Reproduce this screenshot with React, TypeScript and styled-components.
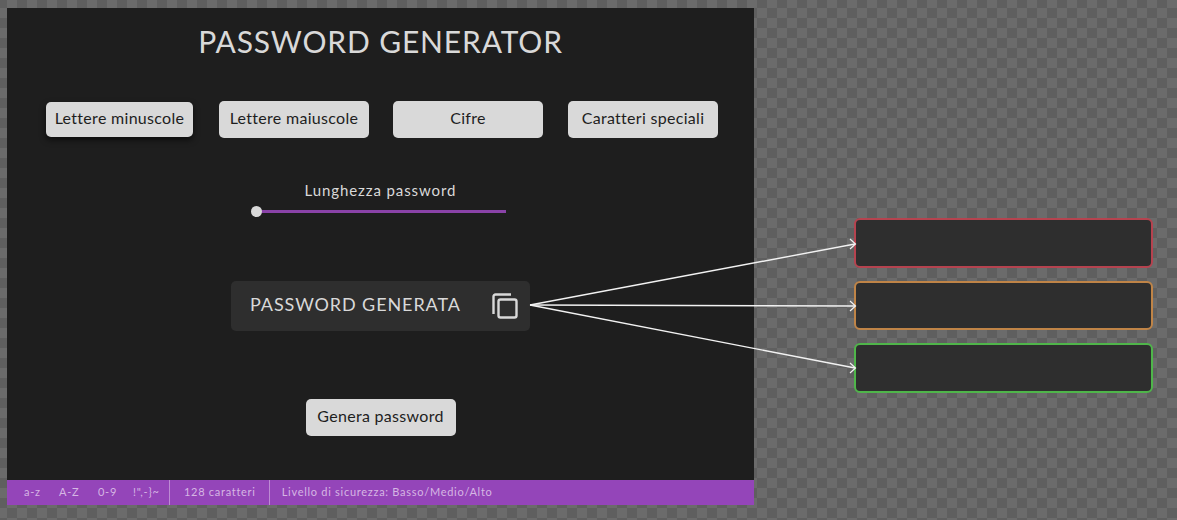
import React from 'react';
import styled, {createGlobalStyle} from 'styled-components';

const FONT = `"Lato", "Noto Sans", sans-serif`;

const GlobalStyle = createGlobalStyle`
    html, body {
        margin: 0;
        padding: 0;
        height: 100%;
        overflow: hidden;
    }
    body {
        font-family: ${FONT};
        background-color: #666666;
        background-image: conic-gradient(#6b6b6b 25%, #5f5f5f 0 50%, #6b6b6b 0 75%, #5f5f5f 0);
        background-size: 20px 20px;
        background-position: 7px 8px;
    }
`

const Canvas = styled.div`
    position: relative;
    width: 1177px;
    height: 520px;
    padding: 8px 0 0 7px;
    box-sizing: border-box;
    display: flex;
    align-items: flex-start;
    gap: 100px;
`

const Panel = styled.main`
    width: 747px;
    height: 497px;
    display: flex;
    flex-direction: column;
    align-items: center;
    background-color: #1e1e1e;
`

const Title = styled.h1`
    margin: 16px 0 0 0;
    height: 34px;
    line-height: 34px;
    font-size: 30px;
    font-weight: 400;
    letter-spacing: 0.85px;
    color: #d9d9d9;
`

const OptionRow = styled.div`
    margin-top: 43px;
    margin-left: 3px;
    display: flex;
    align-items: center;
    gap: 24px;

    & > button:last-child {
        margin-left: 1px;
    }
`

const Chip = styled.button<{$raised?: boolean}>`
    width: ${({$raised}) => ($raised ? '147px' : '150px')};
    height: ${({$raised}) => ($raised ? '35px' : '37px')};
    margin-right: ${({$raised}) => ($raised ? '2px' : '0')};
    padding: 0 0 4px 0;
    border: none;
    border-radius: 5px;
    background-color: #d9d9d9;
    box-shadow: ${({$raised}) => ($raised ? '0 3px 6px rgba(0, 0, 0, 0.6)' : 'none')};
    font-family: ${FONT};
    font-size: 16px;
    letter-spacing: 0.3px;
    color: #1e1e1e;
`

const SliderBlock = styled.div`
    margin-top: 42px;
    width: 250px;
    display: flex;
    flex-direction: column;
    align-items: center;
`

const SliderLabel = styled.div`
    height: 20px;
    line-height: 20px;
    font-size: 15px;
    letter-spacing: 0.9px;
    color: #d9d9d9;
`

const SliderTrack = styled.div`
    position: relative;
    margin-top: 10px;
    width: 100%;
    height: 3px;
    background-color: #8a43a8;
`

const SliderKnob = styled.span`
    position: absolute;
    left: -5px;
    top: -4px;
    width: 11px;
    height: 11px;
    border-radius: 50%;
    background-color: #d9d9d9;
`

const OutputBox = styled.div`
    margin-top: 68px;
    width: 299px;
    height: 50px;
    padding: 0 12px 0 19px;
    box-sizing: border-box;
    display: flex;
    align-items: center;
    justify-content: space-between;
    border-radius: 5px;
    background-color: #2e2e2e;
    font-size: 18px;
    letter-spacing: 0.9px;
    color: #d9d9d9;
`

const OutputText = styled.span`
    padding-bottom: 4px;
`

const CopyIcon = styled.svg`
    display: block;
    width: 26px;
    height: 26px;
`

const GenerateButton = styled(Chip)`
    margin-top: 68px;
`

const StatusBar = styled.footer`
    margin-top: auto;
    align-self: stretch;
    height: 25px;
    padding-left: 17px;
    display: flex;
    align-items: stretch;
    background-color: #9445b9;
    font-size: 11px;
    letter-spacing: 0.72px;
    color: #d6b6e4;
`

const CharsetGroup = styled.div`
    width: 145px;
    padding-bottom: 2px;
    display: flex;
    align-items: center;
`

const Charset = styled.span<{$width: number}>`
    width: ${({$width}) => $width}px;
`

const StatusCell = styled.div`
    padding: 0 13px 2px 12px;
    display: flex;
    align-items: center;
    border-left: 1px solid #bd8bd3;

    &:nth-child(2) {
        padding-left: 14px;
    }
`

const LevelColumn = styled.section`
    margin-top: 210px;
    display: flex;
    flex-direction: column;
    gap: 13px;
`

const LevelBox = styled.div<{$color: string}>`
    width: 299px;
    height: 49.5px;
    box-sizing: border-box;
    border: 2px solid ${({$color}) => $color};
    border-radius: 6px;
    background-color: #2e2e2e;
`

const Arrows = styled.svg`
    position: absolute;
    left: 0;
    top: 0;
    pointer-events: none;
`

const OPTIONS = ['Lettere maiuscole', 'Cifre', 'Caratteri speciali'];

const CHARSETS: [string, number][] = [
    ['a-z', 35],
    ['A-Z', 39],
    ['0-9', 35],
    ['!",-}~', 36],
];

const LEVELS = ['#b5434f', '#bf8447', '#4fb54a'];

const ARROW_ENDS = [244, 306, 368];

function App() {
    return (
        <Canvas>
            <GlobalStyle/>
            <Panel>
                <Title>PASSWORD GENERATOR</Title>
                <OptionRow>
                    <Chip $raised>Lettere minuscole</Chip>
                    {OPTIONS.map(option => (
                        <Chip key={option}>{option}</Chip>
                    ))}
                </OptionRow>
                <SliderBlock>
                    <SliderLabel>Lunghezza password</SliderLabel>
                    <SliderTrack>
                        <SliderKnob/>
                    </SliderTrack>
                </SliderBlock>
                <OutputBox>
                    <OutputText>PASSWORD GENERATA</OutputText>
                    <CopyIcon viewBox="0 0 26 26" fill="none" stroke="#d9d9d9" strokeWidth="2.4">
                        <path d="M1.5 21V3.5a2 2 0 0 1 2-2H19"/>
                        <rect x="6.5" y="6.5" width="18" height="18" rx="2"/>
                    </CopyIcon>
                </OutputBox>
                <GenerateButton>Genera password</GenerateButton>
                <StatusBar>
                    <CharsetGroup>
                        {CHARSETS.map(([label, width]) => (
                            <Charset key={label} $width={width}>{label}</Charset>
                        ))}
                    </CharsetGroup>
                    <StatusCell>128 caratteri</StatusCell>
                    <StatusCell>Livello di sicurezza: Basso/Medio/Alto</StatusCell>
                </StatusBar>
            </Panel>
            <LevelColumn>
                {LEVELS.map(color => (
                    <LevelBox key={color} $color={color}/>
                ))}
            </LevelColumn>
            <Arrows width="1177" height="520" viewBox="0 0 1177 520" fill="none" stroke="#f2f2f2">
                {ARROW_ENDS.map(y => (
                    <g key={y}>
                        <path d={`M530 305L855 ${y}`} strokeWidth="1.4"/>
                        <path d={`M850 ${y - 5}L855.5 ${y}L850 ${y + 5}`} strokeWidth="1.2"/>
                    </g>
                ))}
            </Arrows>
        </Canvas>
    );
}

export default App;
